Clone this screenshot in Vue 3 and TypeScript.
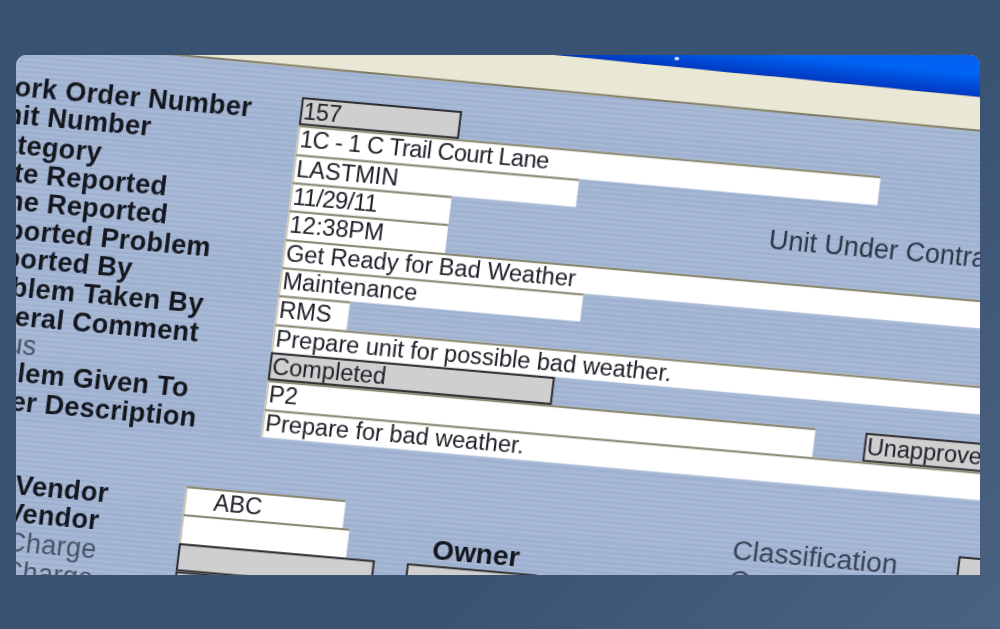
<script setup lang="ts">
interface Field { text: string; width: number; kind: 'white' | 'grey'; side?: string; tight?: boolean }
const labels: { text: string; light?: boolean }[] = [
  { text: 'Work Order Number' }, { text: 'Unit Number' }, { text: 'Category' },
  { text: 'Date Reported' }, { text: 'Time Reported' }, { text: 'Reported Problem' },
  { text: 'Reported By' }, { text: 'Problem Taken By' }, { text: 'General Comment' },
  { text: 'Status', light: true }, { text: 'Problem Given To' }, { text: 'Owner Description' },
]
const fields: Field[] = [
  { text: '157', width: 160, kind: 'grey', tight: true },
  { text: '1C - 1 C Trail Court Lane', width: 582, kind: 'white', tight: true },
  { text: 'LASTMIN', width: 284, kind: 'white' },
  { text: '11/29/11', width: 160, kind: 'white', tight: true },
  { text: '12:38PM', width: 160, kind: 'white' },
  { text: 'Get Ready for Bad Weather', width: 800, kind: 'white' },
  { text: 'Maintenance', width: 302, kind: 'white' },
  { text: 'RMS', width: 72, kind: 'white' },
  { text: 'Prepare unit for possible bad weather.', width: 800, kind: 'white' },
  { text: 'Completed', width: 284, kind: 'grey' },
  { text: 'P2', width: 548, kind: 'white', side: 'Unapproved' },
  { text: 'Prepare for bad weather.', width: 800, kind: 'white' },
]
</script>

<template>
  <div class="page">
    <div class="card">
      <div class="sheet">
        <div class="header">
          <div class="titlebar"><span class="spark"></span></div>
          <div class="menubar"></div>
        </div>
        <div class="form">
          <div class="upper">
            <div class="labels">
              <div v-for="l in labels" :key="l.text" class="label" :class="{ light: l.light }">{{ l.text }}</div>
            </div>
            <div class="fields">
              <div v-for="f in fields" :key="f.text" class="row">
                <div class="field" :class="[f.kind, { tight: f.tight }]" :style="{ width: f.width + 'px' }">{{ f.text }}</div>
                <div v-if="f.side" class="field grey side">{{ f.side }}</div>
              </div>
            </div>
            <div class="contract">Unit Under Contract</div>
          </div>
          <div class="lower">
            <div class="labels lower-labels">
              <div class="label">Vendor</div>
              <div class="label nudge">Vendor</div>
              <div class="label light nudge-small">Charge</div>
              <div class="label light nudge-small">Charge</div>
            </div>
            <div class="vendor-fields">
              <div class="field white abc">ABC</div>
              <div class="field white v2"></div>
              <div class="field grey v3"></div>
              <div class="field grey v3"></div>
            </div>
            <div class="owner">
              <div class="owner-title">Owner</div>
              <div class="field grey owner-box"></div>
            </div>
            <div class="classes">
              <div class="class-text">Classification</div>
              <div class="class-text">C</div>
            </div>
            <div class="field grey class-box"></div>
          </div>
        </div>
      </div>
    </div>
  </div>
</template>

<style>
html, body { margin: 0; padding: 0; }
</style>

<style scoped>
.page {
  --row: 28.35px;
  width: 1000px;
  height: 629px;
  padding: 55px 20px 54px 16px;
  box-sizing: border-box;
  background: linear-gradient(135deg, #3a5272 0%, #3b5373 65%, #4c6281 100%);
  font-family: "Liberation Sans", Arial, sans-serif;
}
.card {
  position: relative;
  width: 964px;
  height: 520px;
  overflow: hidden;
  border-radius: 10px 10px 0 0;
  background: #a3b5d2;
}
.sheet {
  position: absolute;
  left: 0;
  top: 0;
  width: 1250px;
  transform-origin: 0 0;
  transform: matrix(1, 0.088, -0.122, 1, 0.7, -103.4);
  filter: blur(0.55px);
}
.header {
  position: relative;
  z-index: 1;
  background: #e9e8d6;
  transform-origin: 0 0;
  transform: translateY(-4px) skewY(0.37deg);
}
.titlebar {
  position: relative;
  height: 57px;
  background: linear-gradient(180deg, #0a5cf0 0%, #0064f4 60%, #0038c0 100%);
  border-bottom: 1px solid #f5e9c0;
  transform-origin: 0 0;
  transform: translateY(-4px) skewY(0.3deg);
}
.spark {
  position: absolute;
  left: 664px;
  top: 47px;
  width: 4px;
  height: 3px;
  background: #e8f0ff;
}
.menubar {
  height: 32px;
  background: #e9e8d6;
  border-bottom: 2px solid #7f7c66;
}
.form {
  height: 760px;
  padding-top: 27px;
  box-sizing: border-box;
  background: repeating-linear-gradient(180deg, #9fb1d0 0 2.5px, #a8b9d5 2.5px 5px);
}
.upper {
  position: relative;
  display: flex;
}
.labels {
  width: 300px;
  flex: none;
  box-sizing: border-box;
  padding-top: 1px;
  color: #15171f;
}
.label {
  height: var(--row);
  line-height: var(--row);
  margin-left: -11px;
  font-size: 27px;
  font-weight: 700;
  letter-spacing: 0.3px;
  white-space: nowrap;
}
.label.light {
  font-weight: 400;
  color: #4a5266;
}
.label.nudge {
  margin-left: -17px;
}
.label.nudge-small {
  margin-left: -13px;
}
.fields {
  flex: none;
}
.row {
  display: flex;
  height: var(--row);
  gap: 50px;
}
.field {
  height: var(--row);
  box-sizing: border-box;
  padding-left: 1px;
  font-size: 23.5px;
  line-height: 24px;
  color: #20222a;
  white-space: nowrap;
  overflow: hidden;
}
.tight {
  letter-spacing: -0.5px;
}
.white {
  background: #fff;
  border-top: 2px solid #86836c;
  border-left: 2px solid #c9c6b2;
}
.grey {
  background: #cfcfcf;
  border: 2px solid #2a2b30;
}
.side {
  width: 180px;
}
.contract {
  position: absolute;
  left: 779px;
  top: 85px;
  font-size: 27px;
  color: #2c3648;
  white-space: nowrap;
}
.lower {
  display: flex;
  margin-top: 54px;
}
.lower-labels {
  width: 231.5px;
  padding-left: 74px;
  padding-top: 0;
}
.vendor-fields {
  width: 228px;
  flex: none;
}
.abc {
  width: 160px;
  padding-left: 28px;
}
.v2 {
  width: 167px;
}
.v3 {
  width: 196px;
}
.owner {
  width: 321px;
  flex: none;
  padding-top: 27px;
}
.owner-title {
  font-size: 28px;
  line-height: 30px;
  font-weight: 700;
  color: #15171f;
  padding-left: 24px;
}
.owner-box {
  width: 130px;
}
.classes {
  width: 224px;
  flex: none;
  margin-top: 1px;
}
.class-text {
  font-size: 28px;
  line-height: 30px;
  color: #3a4356;
}
.class-box {
  width: 60px;
  margin-top: 2px;
}
</style>
